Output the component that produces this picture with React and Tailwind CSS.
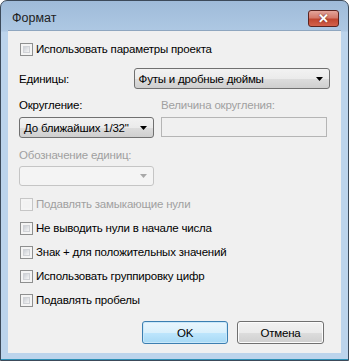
import React from "react";

function Check({ label, disabled }) {
  return (
    <div className="flex items-center h-[16px]">
      <div
        className={
          "w-[13px] h-[13px] border p-[2px] shrink-0 " +
          (disabled ? "border-[#c6c6c6] bg-[#f4f4f4]" : "border-[#8e8f8f] bg-[#f4f4f4]")
        }
      >
        <div
          className={
            "w-full h-full " +
            (disabled
              ? "bg-[#f2f2f2]"
              : "bg-gradient-to-br from-[#cbcfd5] to-[#f6f6f6] border border-[#d0d2d6]")
          }
        />
      </div>
      <span className={"ml-[3px] " + (disabled ? "text-[#a0a0a0]" : "text-black")}>{label}</span>
    </div>
  );
}

function Arrow({ color = "#000" }) {
  return (
    <svg width="7" height="4" viewBox="0 0 7 4" className="shrink-0">
      <path d="M0 0H7L3.5 4Z" fill={color} />
    </svg>
  );
}

function Combo({ text, className = "" }) {
  return (
    <div
      className={
        "h-[21px] border border-[#707070] rounded-[3px] flex items-center pl-[4px] pr-[6px] " +
        "bg-[linear-gradient(#f2f2f2_0%,#ebebeb_50%,#dddddd_51%,#cfcfcf_100%)] " +
        className
      }
    >
      <span className="flex-1 text-black whitespace-nowrap">{text}</span>
      <Arrow />
    </div>
  );
}

export default function App() {
  return (
    <div
      className="w-[349px] h-[361px] border border-[#3c4a5a] rounded-t-[7px] flex flex-col text-[11.5px] tracking-[-0.2px] leading-[16px] bg-[linear-gradient(#9fbbd9_0px,#aec8e3_30px,#bcd4ec_31px,#bcd4ec_100%)]"
      style={{ fontFamily: "'Liberation Sans', Arial, sans-serif" }}
    >
      <div className="h-[29px] flex items-start pl-[11px] pr-[9px]">
        <span className="mt-[9px] text-[12.5px] tracking-normal text-[#1e1e1e]">Формат</span>
        <div className="flex-1" />
        <div className="mt-[9px] w-[31px] h-[17px] rounded-[3px] border border-[#5b2420] bg-[linear-gradient(#e4a59b_0%,#d47a6b_45%,#c04630_55%,#d4624c_100%)] flex items-center justify-center">
          <span
            className="text-white font-bold text-[13px] leading-none"
            style={{ textShadow: "0 0 2px #5b2420" }}
          >
            ✕
          </span>
        </div>
      </div>
      <div className="mx-[7px] h-[323px] bg-[#f0f0f0] border-t border-[#8fa6bf] px-[11px] flex flex-col relative">
        <div className="mt-[10px] pl-[1px]">
          <Check label="Использовать параметры проекта" />
        </div>

        <div className="mt-[11px] flex items-center">
          <span className="w-[115px]">Единицы:</span>
          <Combo text="Футы и дробные дюймы" className="w-[197px]" />
        </div>

        <div className="mt-[8px] flex">
          <div className="w-[142px] flex flex-col">
            <span>Округление:</span>
            <Combo text="До ближайших 1/32&quot;" className="mt-[4px] w-[135px]" />
          </div>
          <div className="flex flex-col">
            <span className="text-[#a0a0a0]">Величина округления:</span>
            <div className="mt-[4px] w-[166px] h-[20px] border border-[#b5b5b5] bg-[#f0f0f0]" />
          </div>
        </div>

        <div className="mt-[9px] flex flex-col">
          <span className="text-[#a0a0a0]">Обозначение единиц:</span>
          <div className="mt-[3px] w-[135px] h-[20px] border border-[#c5c5c5] rounded-[3px] bg-[#f4f4f4] flex items-center justify-end pr-[6px]">
            <Arrow color="#a8a8a8" />
          </div>
        </div>

        <div className="mt-[10px] pl-[1px] flex flex-col gap-[8px]">
          <Check label="Подавлять замыкающие нули" disabled />
          <Check label="Не выводить нули в начале числа" />
          <Check label="Знак + для положительных значений" />
          <Check label="Использовать группировку цифр" />
          <Check label="Подавлять пробелы" />
        </div>

        <div className="mt-[13px] flex justify-end gap-[9px] pr-[6px]">
          <div className="w-[86px] h-[23px] rounded-[3px] border border-[#3c7fb1] bg-[linear-gradient(#eaf6fd_0%,#d9f0fc_50%,#bee6fd_51%,#a7d9f5_100%)] shadow-[inset_0_0_0_1px_#c9e8fa] flex items-center justify-center text-black">
            OK
          </div>
          <div className="w-[87px] h-[23px] rounded-[3px] border border-[#707070] bg-[linear-gradient(#f2f2f2_0%,#ebebeb_50%,#dddddd_51%,#cfcfcf_100%)] shadow-[inset_0_0_0_1px_#fcfcfc] flex items-center justify-center text-black">
            Отмена
          </div>
        </div>
      </div>
      <div className="flex-1 border-b border-[#2b8fb5]" />
    </div>
  );
}
